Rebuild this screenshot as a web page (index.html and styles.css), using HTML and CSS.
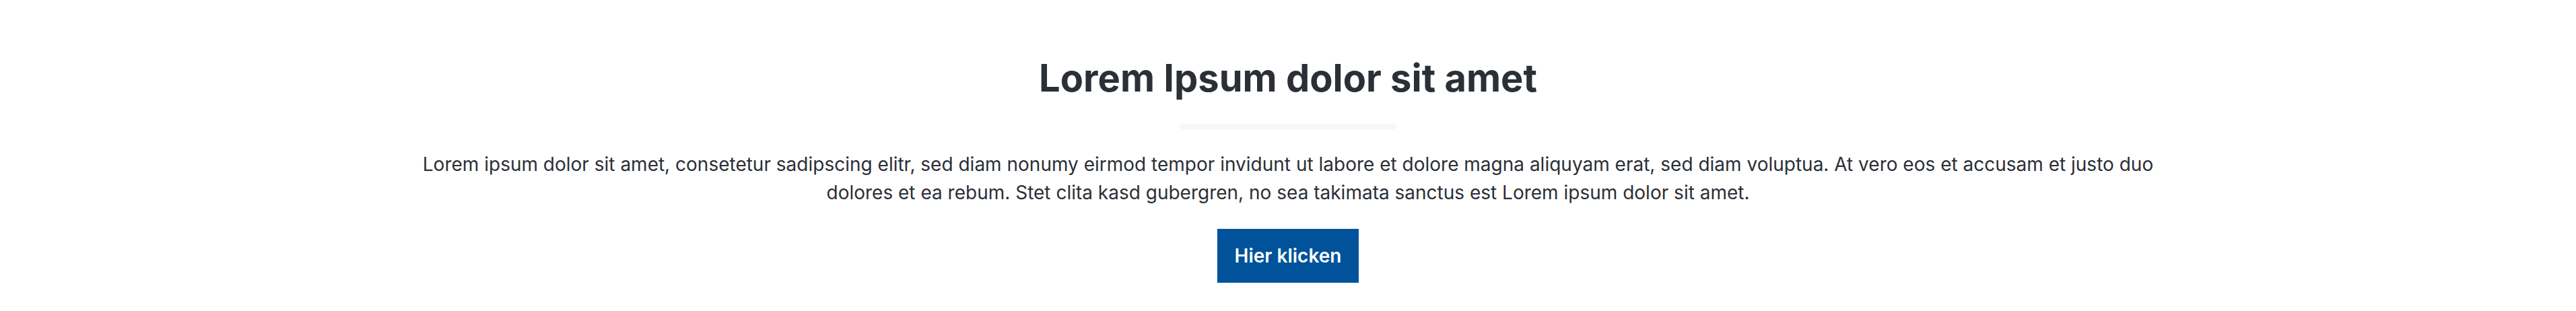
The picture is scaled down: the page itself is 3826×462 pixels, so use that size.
FILE: index.html
```html
<!DOCTYPE html>
<html lang="de">
<head>
    <meta charset="UTF-8">
    <meta name="viewport" content="width=device-width, initial-scale=1.0">
    <title>Lorem Ipsum</title>
    <link rel="stylesheet" href="styles.css">
</head>
<body>
    <section class="teaser">
        <h1 class="teaser-title">Lorem Ipsum dolor sit amet</h1>
        <div class="teaser-divider"></div>
        <p class="teaser-text">
            Lorem ipsum dolor sit amet, consetetur sadipscing elitr, sed diam nonumy eirmod tempor invidunt ut labore et dolore magna aliquyam erat, sed diam voluptua. At vero eos et accusam et justo duo dolores et ea rebum. Stet clita kasd gubergren, no sea takimata sanctus est Lorem ipsum dolor sit amet.
        </p>
        <a href="#" class="teaser-btn">Hier klicken</a>
    </section>
</body>
</html>
```

FILE: styles.css
```css
body {
    font-family: Inter, "Liberation Sans", sans-serif;
    margin: 0;
    background: #fff;
    color: #2b2f36;
}

.teaser {
    display: flex;
    flex-direction: column;
    align-items: center;
    padding: 83px 20px 42px;
    text-align: center;
}

.teaser-title {
    font-size: 56px;
    font-weight: 700;
    line-height: 1.2;
    margin: 0 0 34px;
    color: #2b2f36;
}

.teaser-divider {
    width: 320px;
    height: 8px;
    background: #f6f7f7;
    margin-bottom: 31px;
}

.teaser-text {
    max-width: 2620px;
    font-size: 28px;
    line-height: 1.5;
    margin: 0 0 33px;
}

.teaser-btn {
    display: inline-block;
    background: #00539a;
    color: #fff;
    font-size: 28px;
    font-weight: 600;
    line-height: 1.5;
    padding: 19px 26px;
    text-decoration: none;
}

.teaser-btn:hover {
    background: #00437d;
}
```
